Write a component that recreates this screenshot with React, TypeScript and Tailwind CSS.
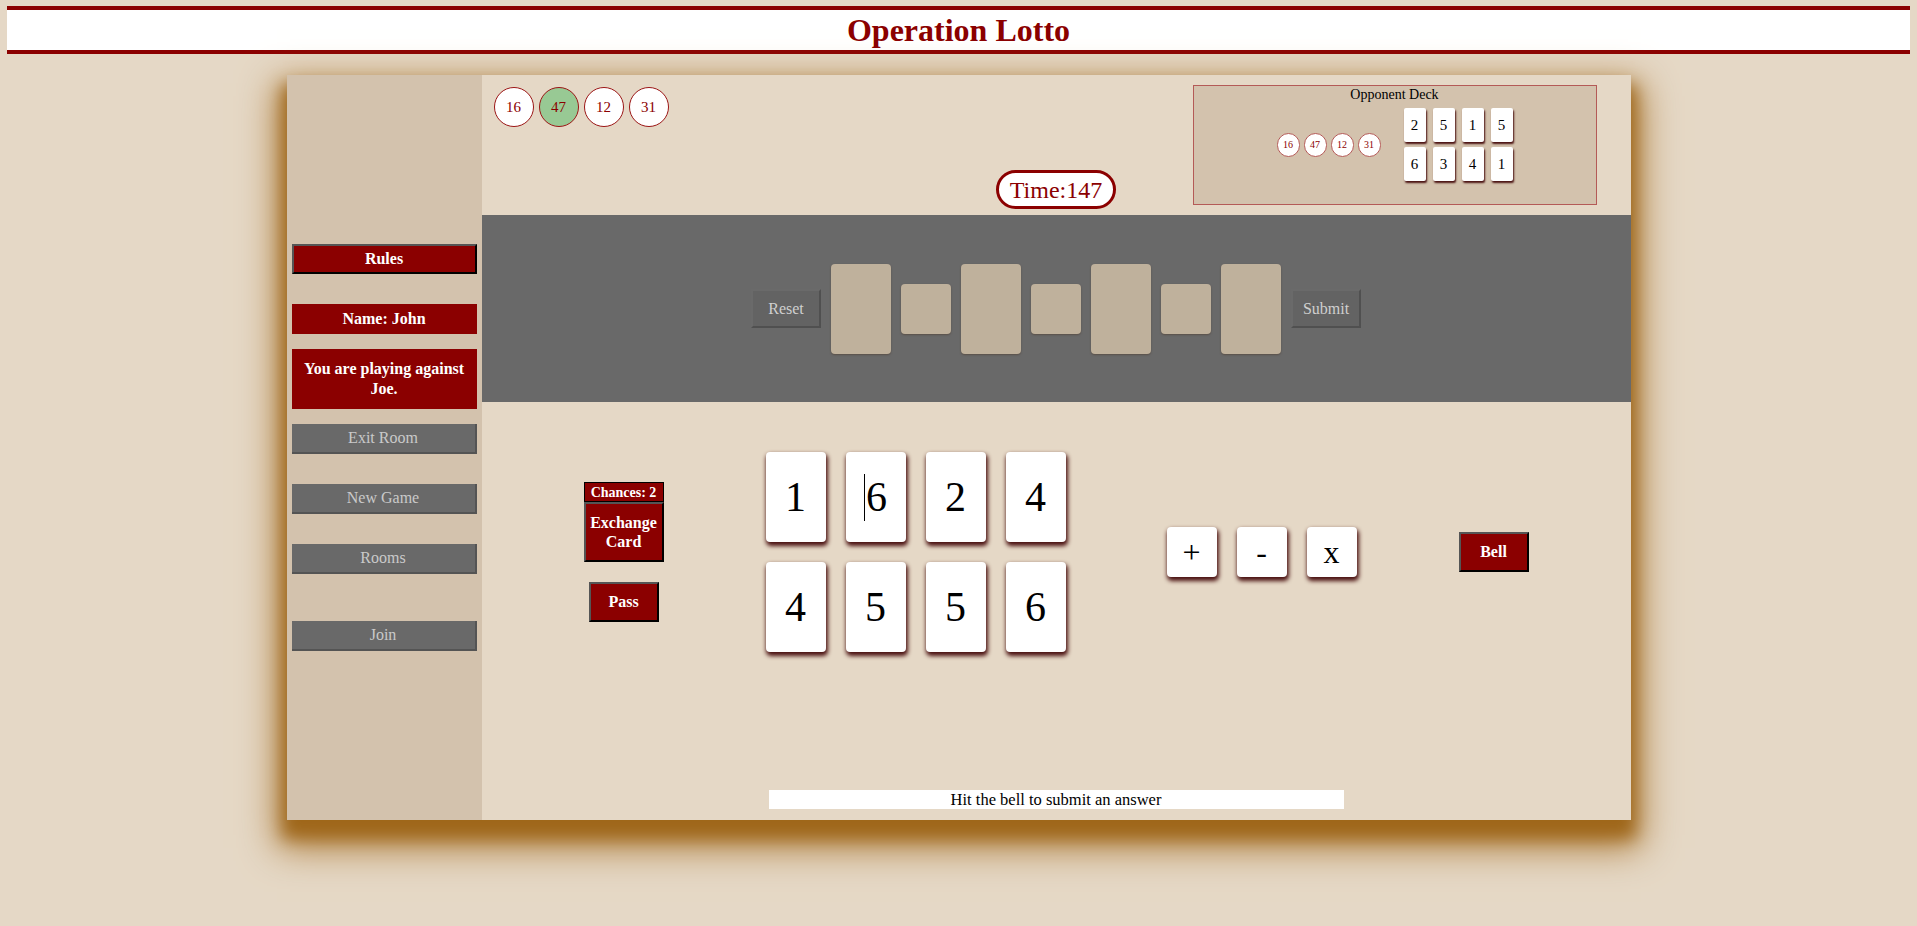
const serif = { fontFamily: '"Liberation Serif", "Times New Roman", serif' };

const balls = [
  { n: 16, active: false },
  { n: 47, active: true },
  { n: 12, active: false },
  { n: 31, active: false },
];

const oppCards = [2, 5, 1, 5, 6, 3, 4, 1];
const myCards = ['1', '6', '2', '4', '4', '5', '5', '6'];

function Ball({ n, active }: { n: number; active: boolean }) {
  return (
    <div
      className={`w-[40px] h-[40px] rounded-full border border-[#9b1515] flex items-center justify-center text-[15px] text-[#8b0000] ${
        active ? 'bg-[#98c994]' : 'bg-white'
      }`}
    >
      {n}
    </div>
  );
}

function SideButton({ label, className = '' }: { label: string; className?: string }) {
  return (
    <div
      className={`h-[30px] bg-[#696969] border-r-2 border-b-2 border-[#545454] flex items-center justify-center text-[16px] text-[#c9c9c9] ${className}`}
    >
      {label}
    </div>
  );
}

export default function App() {
  return (
    <div className="min-h-screen bg-[#e5d8c6] pt-[6px] pb-[80px]" style={serif}>
      {/* header */}
      <div className="mx-[7px] h-[48px] border-y-4 border-[#8b0000] bg-white flex items-center justify-center">
        <h1 className="text-[32px] font-bold text-[#8b0000] leading-none">Operation Lotto</h1>
      </div>

      {/* game panel */}
      <div className="mx-auto mt-[21px] w-[1344px] h-[745px] flex shadow-[0_14px_16px_4px_#9f671a,0_18px_36px_10px_#b08040]">
        {/* sidebar */}
        <div className="w-[195px] shrink-0 bg-[#d3c2ad] px-[5px] pt-[169px] flex flex-col">
          <div className="h-[30px] bg-[#8b0000] border-2 border-t-[#555] border-l-[#555] border-r-black border-b-black flex items-center justify-center text-[16px] font-bold text-white">
            Rules
          </div>
          <div className="mt-[30px] h-[30px] bg-[#8b0000] flex items-center justify-center text-[16px] font-bold text-white">
            Name: John
          </div>
          <div className="mt-[15px] h-[60px] bg-[#8b0000] flex items-center justify-center text-center text-[16px] leading-[20px] font-bold text-white px-2">
            You are playing against Joe.
          </div>
          <SideButton label="Exit Room" className="mt-[15px]" />
          <SideButton label="New Game" className="mt-[30px]" />
          <SideButton label="Rooms" className="mt-[30px]" />
          <SideButton label="Join" className="mt-[47px]" />
        </div>

        {/* main content */}
        <div className="flex-1 bg-[#e5d8c6] flex flex-col">
          {/* top area */}
          <div className="h-[140px] grid grid-cols-[1fr_auto_1fr]">
            <div className="pt-[12px] pl-[12px] flex gap-[5px] self-start">
              {balls.map((b) => (
                <Ball key={b.n} n={b.n} active={b.active} />
              ))}
            </div>
            <div className="self-end mb-[6px] w-[120px] h-[39px] rounded-full border-[3px] border-[#8b0000] bg-white flex items-center justify-center text-[24px] text-[#8b0000]">
              Time:147
            </div>
            <div className="justify-self-end self-start mt-[10px] mr-[34px] w-[404px] h-[120px] border border-[#b45a57] bg-[#d3c2ad] flex flex-col">
              <div className="text-center text-[14px] leading-[18px] text-black">Opponent Deck</div>
              <div className="mt-[4px] flex items-center justify-center gap-[23px]">
                <div className="flex gap-[4px]">
                  {balls.map((b) => (
                    <div
                      key={b.n}
                      className="w-[23px] h-[24px] rounded-full border border-[#b45a57] bg-white flex items-center justify-center text-[10px] text-[#8b0000]"
                    >
                      {b.n}
                    </div>
                  ))}
                </div>
                <div className="grid grid-cols-4 gap-x-[7px] gap-y-[5px]">
                  {oppCards.map((c, i) => (
                    <div
                      key={i}
                      className="w-[22px] h-[34px] rounded-[2px] bg-white shadow-[1px_2px_2px_#4a1111] flex items-center justify-center text-[15px] text-black"
                    >
                      {c}
                    </div>
                  ))}
                </div>
              </div>
            </div>
          </div>

          {/* expression area */}
          <div className="h-[187px] bg-[#696969] flex items-center justify-center gap-[10px]">
            <div className="w-[70px] h-[39px] bg-[#636363] border-2 border-t-[#6a6a6a] border-l-[#6a6a6a] border-r-[#505050] border-b-[#505050] flex items-center justify-center text-[16px] text-[#cfcfcf]">
              Reset
            </div>
            <div className="w-[60px] h-[90px] rounded-[4px] bg-[#bfb19c] shadow-[0_1px_2px_#5a5048]" />
            <div className="w-[50px] h-[50px] rounded-[4px] bg-[#bfb19c] shadow-[0_1px_2px_#5a5048]" />
            <div className="w-[60px] h-[90px] rounded-[4px] bg-[#bfb19c] shadow-[0_1px_2px_#5a5048]" />
            <div className="w-[50px] h-[50px] rounded-[4px] bg-[#bfb19c] shadow-[0_1px_2px_#5a5048]" />
            <div className="w-[60px] h-[90px] rounded-[4px] bg-[#bfb19c] shadow-[0_1px_2px_#5a5048]" />
            <div className="w-[50px] h-[50px] rounded-[4px] bg-[#bfb19c] shadow-[0_1px_2px_#5a5048]" />
            <div className="w-[60px] h-[90px] rounded-[4px] bg-[#bfb19c] shadow-[0_1px_2px_#5a5048]" />
            <div className="w-[70px] h-[39px] bg-[#636363] border-2 border-t-[#6a6a6a] border-l-[#6a6a6a] border-r-[#505050] border-b-[#505050] flex items-center justify-center text-[16px] text-[#cfcfcf]">
              Submit
            </div>
          </div>

          {/* hand area */}
          <div className="flex-1 flex flex-col">
            <div className="mt-[50px] h-[200px] flex items-center">
              <div className="w-[284px] flex flex-col items-center">
                <div className="w-[80px] h-[20px] bg-[#8b0000] border border-black flex items-center justify-center text-[14px] font-bold text-white">
                  Chances: 2
                </div>
                <div className="w-[80px] h-[60px] bg-[#8b0000] border-2 border-t-[#555] border-l-[#555] border-r-black border-b-black flex items-center justify-center text-center text-[16px] leading-[19px] font-bold text-white">
                  Exchange Card
                </div>
                <div className="mt-[20px] w-[70px] h-[40px] bg-[#8b0000] border-2 border-t-[#555] border-l-[#555] border-r-black border-b-black flex items-center justify-center text-[16px] font-bold text-white">
                  Pass
                </div>
              </div>

              <div className="w-[300px] grid grid-cols-4 gap-[20px]">
                {myCards.map((c, i) => (
                  <div
                    key={i}
                    className="w-[60px] h-[90px] rounded-[4px] bg-white shadow-[1px_3px_4px_1px_#4a1111] flex items-center justify-center text-[42px] text-black"
                  >
                    {i === 1 && <span className="w-px h-[47px] bg-black mr-[1px]" />}
                    {c}
                  </div>
                ))}
              </div>

              <div className="ml-[101px] flex gap-[20px]">
                {['+', '-', 'x'].map((op) => (
                  <div
                    key={op}
                    className="w-[50px] h-[50px] rounded-[4px] bg-white shadow-[1px_3px_4px_1px_#4a1111] flex items-center justify-center text-[32px] text-black"
                  >
                    {op}
                  </div>
                ))}
              </div>

              <div className="ml-[102px] w-[70px] h-[40px] bg-[#8b0000] border-2 border-t-[#555] border-l-[#555] border-r-black border-b-black flex items-center justify-center text-[16px] font-bold text-white">
                Bell
              </div>
            </div>

            <div className="mt-auto mb-[11px] mx-auto w-[575px] h-[19px] bg-white text-center text-[16.5px] leading-[19px] text-black">
              Hit the bell to submit an answer
            </div>
          </div>
        </div>
      </div>
    </div>
  );
}
